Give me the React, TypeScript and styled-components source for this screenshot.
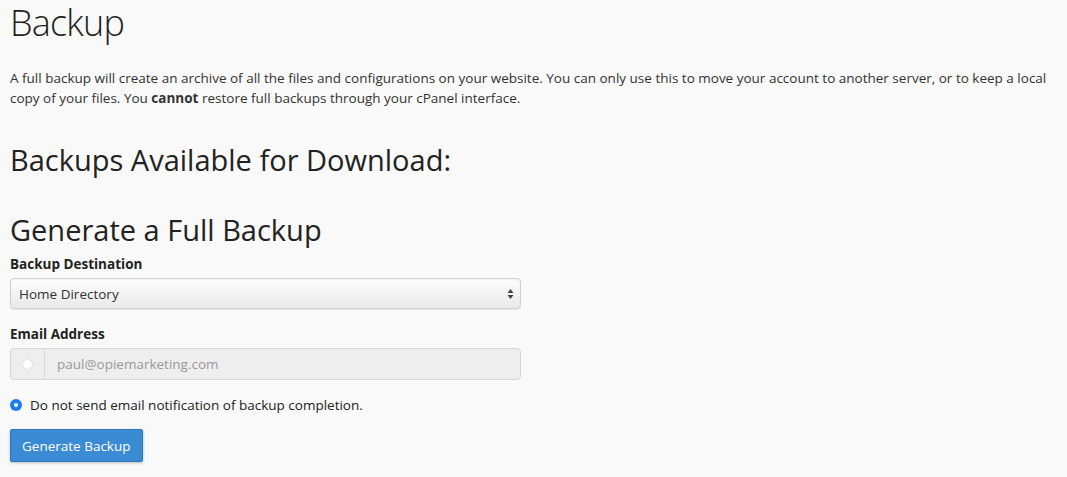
import React from "react";
import styled, { createGlobalStyle } from "styled-components";

const Global = createGlobalStyle`
  html, body { margin: 0; padding: 0; background: #f9f9f9; }
  body { font-family: "Open Sans", "Liberation Sans", sans-serif; color: #333; }
  *, *::before, *::after { box-sizing: border-box; }
`;

const Page = styled.div`
  padding: 0 10px 16px 10px;
  font-size: 13.5px;
  line-height: 20px;
`;

const Title = styled.h1`
  font-weight: 300;
  font-size: 36px;
  line-height: 44px;
  letter-spacing: -0.8px;
  margin: 1px 0 23px;
  color: #222;
`;

const Lead = styled.p`
  margin: 0 0 34px;
  max-width: 1047px;
`;

const H2 = styled.h2<{ $gap: number }>`
  font-weight: 400;
  font-size: 29px;
  line-height: 36px;
  margin: 0 0 ${(p) => p.$gap}px;
  color: #222;
`;

const Field = styled.div`
  width: 511px;
  margin-bottom: 15px;
`;

const Label = styled.label`
  display: block;
  font-weight: 700;
  margin-bottom: 4px;
  color: #222;
`;

const SelectBox = styled.div`
  height: 31px;
  border: 1px solid #d0d0d0;
  border-radius: 4px;
  background: linear-gradient(#fefefe 0%, #f4f4f4 45%, #e9e9e9 100%);
  box-shadow: inset 0 1px 2px rgba(0, 0, 0, 0.06), 0 1px 1px rgba(0, 0, 0, 0.08);
  display: flex;
  align-items: center;
  justify-content: space-between;
  padding: 0 6px 0 8px;
  color: #333;
`;

const Arrows = styled.svg`
  width: 7px;
  height: 12px;
`;

const InputGroup = styled.div`
  height: 32px;
  border: 1px solid #d6d6d6;
  border-radius: 4px;
  background: #eeeeee;
  display: flex;
  align-items: stretch;
`;

const Addon = styled.div`
  width: 34px;
  border-right: 1px solid #d6d6d6;
  display: flex;
  align-items: center;
  justify-content: center;
`;

const EmptyRadio = styled.span`
  width: 11px;
  height: 11px;
  border-radius: 50%;
  background: #fff;
  border: 1px solid #e2e2e2;
`;

const InputText = styled.div`
  display: flex;
  align-items: center;
  padding-left: 12px;
  color: #999;
`;

const RadioRow = styled.div`
  display: flex;
  align-items: center;
  gap: 8px;
  margin: 11px 0 14px;
  color: #222;
`;

const CheckedRadio = styled.span`
  width: 12px;
  height: 12px;
  border-radius: 50%;
  background: #1a7ff6;
  display: flex;
  align-items: center;
  justify-content: center;
  &::after {
    content: "";
    width: 4px;
    height: 4px;
    border-radius: 50%;
    background: #fff;
  }
`;

const Button = styled.button`
  font-family: inherit;
  font-size: 13.5px;
  color: #fff;
  background: #3b8ad4;
  border: 1px solid #2f78bd;
  border-radius: 2px;
  height: 33px;
  padding: 0 11px;
  box-shadow: 0 1px 3px rgba(0, 0, 0, 0.25);
`;

export default function App() {
  return (
    <>
      <Global />
      <Page>
        <Title>Backup</Title>
        <Lead>
          A full backup will create an archive of all the files and configurations on your website. You can only use
          this to move your account to another server, or to keep a local copy of your files. You <b>cannot</b> restore
          full backups through your cPanel interface.
        </Lead>
        <H2 $gap={34}>Backups Available for Download:</H2>
        <H2 $gap={6}>Generate a Full Backup</H2>
        <Field>
          <Label>Backup Destination</Label>
          <SelectBox>
            <span>Home Directory</span>
            <Arrows viewBox="0 0 7 12">
              <path d="M3.5 1 L6.5 5 L0.5 5 Z" fill="#444" />
              <path d="M3.5 11 L6.5 7 L0.5 7 Z" fill="#444" />
            </Arrows>
          </SelectBox>
        </Field>
        <Field>
          <Label>Email Address</Label>
          <InputGroup>
            <Addon>
              <EmptyRadio />
            </Addon>
            <InputText>paul@opiemarketing.com</InputText>
          </InputGroup>
        </Field>
        <RadioRow>
          <CheckedRadio />
          <span>Do not send email notification of backup completion.</span>
        </RadioRow>
        <Button>Generate Backup</Button>
      </Page>
    </>
  );
}
